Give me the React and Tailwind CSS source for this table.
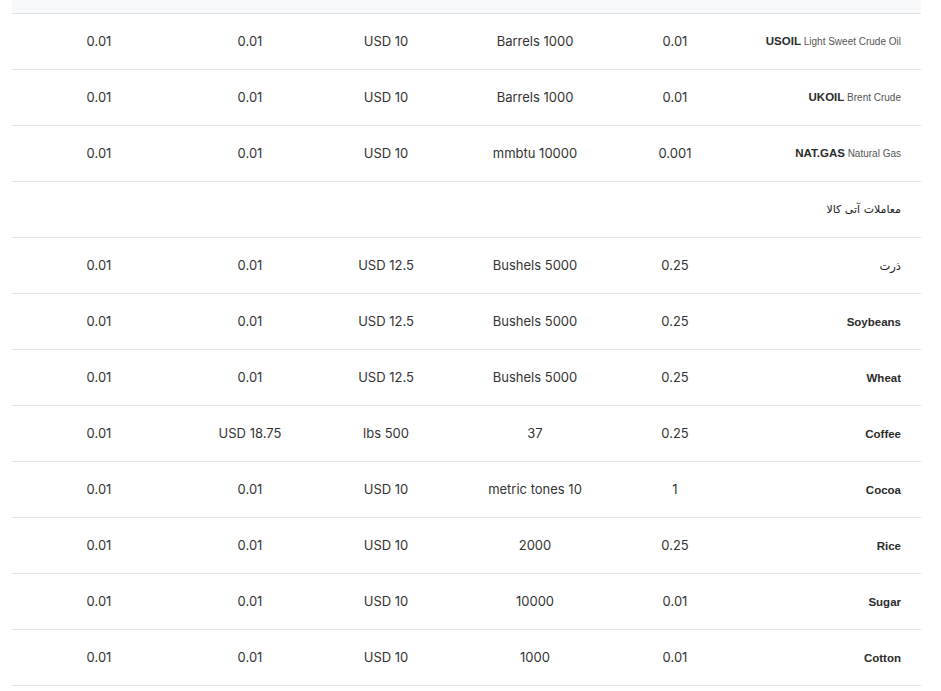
const rows = [
    { a: '0.01', b: '0.01', c: 'USD 10', d: 'Barrels 1000', e: '0.01', sym: 'USOIL', desc: 'Light Sweet Crude Oil' },
    { a: '0.01', b: '0.01', c: 'USD 10', d: 'Barrels 1000', e: '0.01', sym: 'UKOIL', desc: 'Brent Crude' },
    { a: '0.01', b: '0.01', c: 'USD 10', d: 'mmbtu 10000', e: '0.001', sym: 'NAT.GAS', desc: 'Natural Gas' },
    { section: 'معاملات آتی کالا' },
    { a: '0.01', b: '0.01', c: 'USD 12.5', d: 'Bushels 5000', e: '0.25', fa: 'ذرت' },
    { a: '0.01', b: '0.01', c: 'USD 12.5', d: 'Bushels 5000', e: '0.25', sym: 'Soybeans' },
    { a: '0.01', b: '0.01', c: 'USD 12.5', d: 'Bushels 5000', e: '0.25', sym: 'Wheat' },
    { a: '0.01', b: 'USD 18.75', c: 'lbs 500', d: '37', e: '0.25', sym: 'Coffee' },
    { a: '0.01', b: '0.01', c: 'USD 10', d: 'metric tones 10', e: '1', sym: 'Cocoa' },
    { a: '0.01', b: '0.01', c: 'USD 10', d: '2000', e: '0.25', sym: 'Rice' },
    { a: '0.01', b: '0.01', c: 'USD 10', d: '10000', e: '0.01', sym: 'Sugar' },
    { a: '0.01', b: '0.01', c: 'USD 10', d: '1000', e: '0.01', sym: 'Cotton' },
];

const cell = "text-center text-[13px] text-[#333]";
const fa = { fontFamily: '"DejaVu Sans", "Noto Sans", sans-serif' };

const App = () => {
    return (
        <div className="min-h-screen bg-white px-[12px] font-['Inter',sans-serif]">
            <div className="w-[909px]">
                <div className="h-[14px] bg-[#f8f9fb] border-b border-[#dfe2e6]" />

                {rows.map((r, i) => (
                    <div key={i} className="h-[56px] flex items-center border-b border-[#dfe2e6]">
                        {r.section ? (
                            <div className="flex-1 text-right pr-[20px] text-[11px] leading-[14px] text-[#222]" dir="rtl" style={fa}>{r.section}</div>
                        ) : (
                            <>
                                <div className={`w-[174px] ${cell}`}>{r.a}</div>
                                <div className={`w-[128px] ${cell}`}>{r.b}</div>
                                <div className={`w-[144px] ${cell}`}>{r.c}</div>
                                <div className={`w-[154px] ${cell}`}>{r.d}</div>
                                <div className={`w-[126px] ${cell}`}>{r.e}</div>
                                <div className="flex-1 text-right pr-[20px] text-[11.5px] leading-[14px] font-['Liberation_Sans',Arial,sans-serif] text-[#333]">
                                    {r.fa ? (
                                        <span className="text-[#222]" dir="rtl" style={fa}>{r.fa}</span>
                                    ) : (
                                        <>
                                            <span className="font-bold text-[#2b2b2b]">{r.sym}</span>
                                            {r.desc && <span className="text-[10px] text-[#555]"> {r.desc}</span>}
                                        </>
                                    )}
                                </div>
                            </>
                        )}
                    </div>
                ))}
            </div>
        </div>
    );
};

export default App;
